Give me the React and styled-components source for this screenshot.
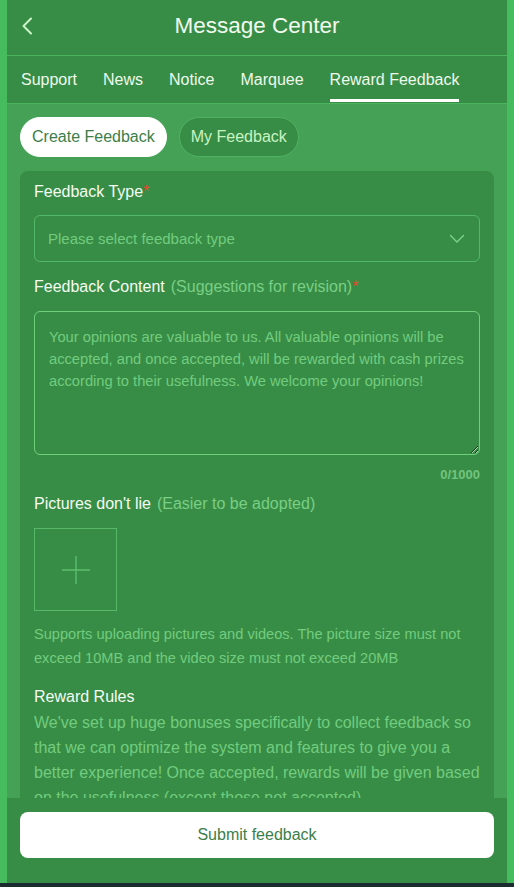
import React, { useState } from 'react';
import styled, { createGlobalStyle } from 'styled-components';

const GlobalStyle = createGlobalStyle`
    * {
        box-sizing: border-box;
    }
    body {
        margin: 0;
        background-color: #46bc5e;
        font-family: "Liberation Sans", Arial, sans-serif;
    }
`

const Page = styled.div`
    width: 500px;
    min-height: 100vh;
    margin: 0 auto;
    background-color: #45a156;
    display: flex;
    flex-direction: column;
`

const Header = styled.header`
    height: 56px;
    display: flex;
    align-items: center;
    justify-content: center;
    background-color: #388d46;
    border-bottom: 1px solid #4cb45f;
    position: relative;

    h1 {
        margin: 0;
        font-size: 22.5px;
        font-weight: 400;
        color: #f1fbef;
        margin-top: -4px;
    }
`

const BackButton = styled.div`
    position: absolute;
    left: 14px;
    top: 16px;
    width: 16px;
    height: 20px;
    display: flex;
    align-items: center;
    cursor: pointer;
`

const Tabs = styled.nav`
    height: 48px;
    display: flex;
    align-items: stretch;
    gap: 26px;
    padding: 0 14px;
    background-color: #388d46;
    border-bottom: 1px solid #4cb45f;
`

const Tab = styled.div`
    display: flex;
    align-items: center;
    padding-top: 4px;
    font-size: 16px;
    color: #eef9ec;
    border-bottom: 3px solid ${props => props.$active ? '#ffffff' : 'transparent'};
    margin-bottom: 1px;
    cursor: pointer;
`

const Content = styled.main`
    padding: 13px 13px 120px;
    display: flex;
    flex-direction: column;
    gap: 14px;
`

const Pills = styled.div`
    display: flex;
    gap: 12px;
`

const Pill = styled.div`
    height: 40px;
    padding: 0 11px;
    display: flex;
    align-items: center;
    border-radius: 20px;
    font-size: 16px;
    cursor: pointer;
    background-color: ${props => props.$active ? '#ffffff' : '#388d46'};
    color: ${props => props.$active ? '#3b7e49' : '#c9f3c2'};
    border: 1px solid ${props => props.$active ? '#ffffff' : '#4fb262'};
`

const Card = styled.section`
    background-color: #388d46;
    border-radius: 8px;
    padding: 10px 14px 40px;
    display: flex;
    flex-direction: column;
`

const Label = styled.div`
    font-size: 16px;
    line-height: 22px;
    color: #f4fbf2;
    margin-top: ${props => props.$top || 0}px;
    margin-bottom: ${props => props.$bottom || 0}px;

    span {
        color: #78cf85;
        margin-left: 6px;
    }

    em {
        font-style: normal;
        color: #e3482c;
    }
`

const Select = styled.div`
    height: 47px;
    border: 1px solid #53b867;
    border-radius: 6px;
    padding: 0 14px 0 13px;
    display: flex;
    align-items: center;
    justify-content: space-between;
    font-size: 15px;
    color: #72cc7f;
    cursor: pointer;
`

const TextArea = styled.textarea`
    display: block;
    width: 100%;
    height: 144px;
    padding: 14px 14px;
    border: 1px solid #6fd07c;
    border-radius: 6px;
    background: transparent;
    font-family: "Liberation Sans", Arial, sans-serif;
    font-size: 14.7px;
    line-height: 22px;
    color: #ecf9ea;
    outline: none;

    &::placeholder {
        color: #72cc7f;
    }
`

const Counter = styled.div`
    text-align: right;
    margin-top: 11px;
    font-size: 13px;
    line-height: 18px;
    font-weight: 700;
    color: #72c47e;
`

const UploadBox = styled.div`
    width: 83px;
    height: 83px;
    border: 1px solid #55b968;
    display: flex;
    align-items: center;
    justify-content: center;
    cursor: pointer;
`

const Hint = styled.p`
    margin: 11px 0 0;
    font-size: 14.6px;
    line-height: 24px;
    color: #72cc7f;
`

const Rules = styled.p`
    margin: 2px 0 0;
    font-size: 16px;
    line-height: 25px;
    color: #72cc7f;
`

const BottomBar = styled.footer`
    position: fixed;
    bottom: 0;
    left: 50%;
    transform: translateX(-50%);
    width: 500px;
    display: flex;
    flex-direction: column;
`

const SubmitArea = styled.div`
    height: 85px;
    padding: 14px 13px 0;
    background-color: #388d46;
`

const SubmitButton = styled.button`
    width: 100%;
    height: 46px;
    border: none;
    border-radius: 8px;
    background-color: #ffffff;
    font-family: "Liberation Sans", Arial, sans-serif;
    font-size: 16px;
    color: #3b7e49;
    cursor: pointer;
`

const Taskbar = styled.div`
    height: 4px;
    margin: 0 -7px;
    background-color: #1c2b30;
`

const tabs = ['Support', 'News', 'Notice', 'Marquee', 'Reward Feedback'];

export default function App() {
    const [activeTab, setActiveTab] = useState(4);
    const [mode, setMode] = useState('create');
    const [text, setText] = useState('');

    return (
        <>
            <GlobalStyle />
            <Page>
                <Header>
                    <BackButton>
                        <svg width="12" height="18" viewBox="0 0 12 18" fill="none">
                            <path d="M10 1.5 L2.5 9 L10 16.5" stroke="#cdf3c9" strokeWidth="2" strokeLinecap="round" strokeLinejoin="round" />
                        </svg>
                    </BackButton>
                    <h1>Message Center</h1>
                </Header>

                <Tabs>
                    {tabs.map((name, index) => (
                        <Tab key={name} $active={index === activeTab} onClick={() => setActiveTab(index)}>
                            {name}
                        </Tab>
                    ))}
                </Tabs>

                <Content>
                    <Pills>
                        <Pill $active={mode === 'create'} onClick={() => setMode('create')}>Create Feedback</Pill>
                        <Pill $active={mode === 'mine'} onClick={() => setMode('mine')}>My Feedback</Pill>
                    </Pills>

                    <Card>
                        <Label $bottom={12}>Feedback Type<em>*</em></Label>
                        <Select>
                            Please select feedback type
                            <svg width="16" height="10" viewBox="0 0 16 10" fill="none">
                                <path d="M1.5 1.5 L8 8 L14.5 1.5" stroke="#7ed08a" strokeWidth="1.4" strokeLinecap="round" strokeLinejoin="round" />
                            </svg>
                        </Select>

                        <Label $top={14} $bottom={13}>
                            Feedback Content<span>(Suggestions for revision)<em>*</em></span>
                        </Label>
                        <TextArea
                            value={text}
                            maxLength={1000}
                            onChange={(e) => setText(e.target.value)}
                            placeholder="Your opinions are valuable to us. All valuable opinions will be accepted, and once accepted, will be rewarded with cash prizes according to their usefulness. We welcome your opinions!"
                        />
                        <Counter>{text.length}/1000</Counter>

                        <Label $top={9} $bottom={13}>
                            Pictures don't lie<span>(Easier to be adopted)</span>
                        </Label>
                        <UploadBox>
                            <svg width="30" height="30" viewBox="0 0 30 30" fill="none">
                                <path d="M15 1 V29 M1 15 H29" stroke="#5dc06d" strokeWidth="1.3" />
                            </svg>
                        </UploadBox>
                        <Hint>
                            Supports uploading pictures and videos. The picture size must not exceed 10MB and the video size must not exceed 20MB
                        </Hint>

                        <Label $top={16}>Reward Rules</Label>
                        <Rules>
                            We've set up huge bonuses specifically to collect feedback so that we can optimize the system and features to give you a better experience! Once accepted, rewards will be given based on the usefulness (except those not accepted).
                        </Rules>
                    </Card>
                </Content>

                <BottomBar>
                    <SubmitArea>
                        <SubmitButton>Submit feedback</SubmitButton>
                    </SubmitArea>
                    <Taskbar />
                </BottomBar>
            </Page>
        </>
    );
}
